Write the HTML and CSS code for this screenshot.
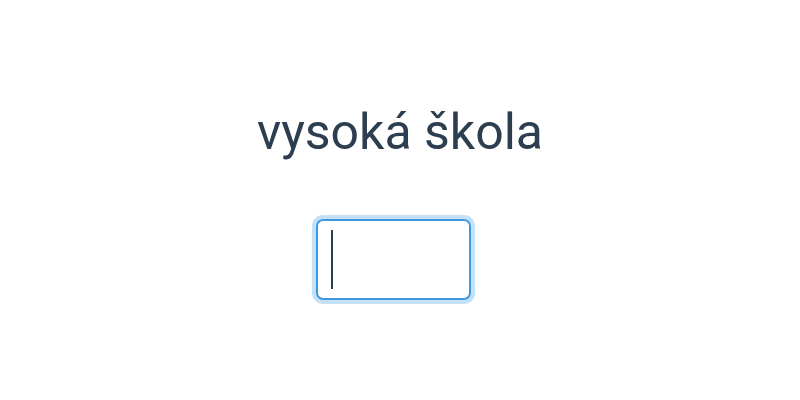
FILE: index.html
```html
<!DOCTYPE html>
<html lang="cs">
<head>
<meta charset="utf-8">
<link rel="stylesheet" href="styles.css">
</head>
<body>
<div class="app">
  <h1 class="title">vysoká škola</h1>
  <div class="field"><span class="caret"></span></div>
</div>
</body>
</html>
```
FILE: styles.css
```css
html, body {
  margin: 0;
  padding: 0;
  background: #ffffff;
}
.app {
  width: 800px;
  height: 400px;
  display: flex;
  flex-direction: column;
  align-items: center;
  font-family: Roboto, "Noto Sans", sans-serif;
  color: #2c3e50;
}
.title {
  margin: 104px 0 0 0;
  font-size: 50px;
  font-weight: 400;
  line-height: 56px;
}
.field {
  margin-top: 59px;
  margin-right: 13px;
  box-sizing: border-box;
  width: 155px;
  height: 81px;
  border: 2px solid #3c99e0;
  border-radius: 7px;
  box-shadow: 0 0 0 4px rgba(60, 153, 224, 0.3);
  display: flex;
  align-items: center;
  padding-left: 13px;
}
.caret {
  width: 2px;
  height: 59px;
  background: #2c3e50;
}
```
